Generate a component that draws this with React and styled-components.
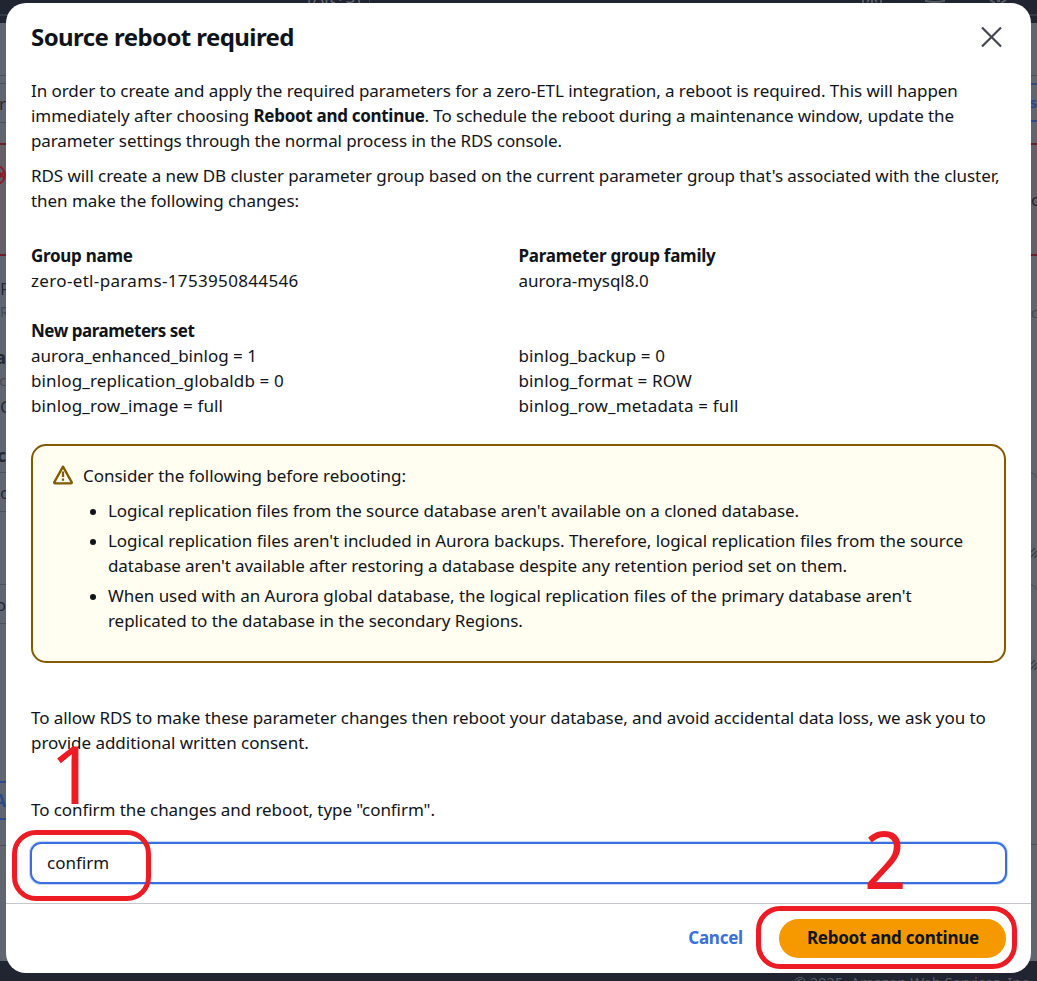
import React from 'react';
import styled, { createGlobalStyle } from 'styled-components';

const GlobalStyle = createGlobalStyle`
  * { box-sizing: border-box; }
  body {
    margin: 0;
    overflow: hidden;
    color: #0f141a;
    font: 400 17px/25px "Noto Sans", "Open Sans", sans-serif;
  }
`;

const Page = styled.div`
  position: relative;
  width: 1037px;
  height: 981px;
  display: flex;
  flex-direction: column;
  overflow: hidden;
  background: #61656f;
`;

const TopBar = styled.header`
  display: flex;
  justify-content: space-between;
  height: 23px;
  flex: none;
  padding: 0 29px 0 307px;
  background: linear-gradient(#202531 0 14px, #353a46 14px 16px, #202531 16px);
  color: #676b74;
`;

const Shortcut = styled.span`
  margin-top: -16px;
  padding-right: 8px;
  height: 19px;
  font-size: 17px;
  line-height: 25px;
  letter-spacing: 0.4px;
  border-right: 1px solid #3d424d;
`;

const TopIcons = styled.div`
  display: flex;
  gap: 43px;
`;

const Behind = styled.main`
  flex: 1;
  display: flex;
  justify-content: space-between;
`;

const EdgeColumn = styled.div`
  width: 6px;
  display: flex;
  flex-direction: column;
  overflow: hidden;
`;

const Slice = styled.div`
  flex: none;
  display: flex;
  flex-direction: column;
  justify-content: center;
  align-items: ${(p) => (p.$left ? 'flex-start' : 'flex-end')};
  height: ${(p) => p.$h}px;
  overflow: hidden;
  white-space: nowrap;
  font-size: ${(p) => p.$size || 17}px;
  font-weight: ${(p) => (p.$bold ? 700 : 400)};
  color: ${(p) => p.$color || '#242934'};
  background: ${(p) => p.$fill || 'transparent'};
  border-bottom: ${(p) => p.$line || 0}px solid ${(p) => p.$lineColor || '#4b505b'};
`;

const ErrorIcon = styled.svg`
  margin-bottom: 50px;
`;

const PageFooter = styled.footer`
  flex: none;
  height: 20px;
  padding: 9px 5px 0 0;
  background: #202531;
  color: #555a64;
  text-align: right;
  white-space: nowrap;
  font-size: 15px;
  letter-spacing: -0.23px;
`;

const Modal = styled.section`
  position: absolute;
  inset: 3px 6px 8px 6px;
  display: flex;
  flex-direction: column;
  border-radius: 20px;
  background: #fff;
`;

const ModalHeader = styled.header`
  display: flex;
  justify-content: space-between;
  align-items: flex-start;
  padding: 19px 28px 0 25px;
  height: 75px;
`;

const Title = styled.h1`
  margin: 0;
  font-size: 24px;
  line-height: 30px;
  font-weight: 700;
  letter-spacing: -0.58px;
`;

const CloseButton = styled.button`
  display: flex;
  margin: 4px 0 0;
  padding: 0;
  border: 0;
  background: none;
`;

const ModalBody = styled.div`
  flex: 1;
  padding: 0 25px;
`;

const Line = styled.span`
  display: block;
  white-space: nowrap;
  letter-spacing: ${(p) => p.$track || 0}px;
`;

const Run = styled.span`
  letter-spacing: ${(p) => p.$track}px;
`;

const Strong = styled.b`
  font-weight: 700;
  letter-spacing: ${(p) => p.$track}px;
`;

const Paragraph = styled.p`
  margin: 0 0 ${(p) => p.$after || 0}px;
`;

const Columns = styled.div`
  display: grid;
  grid-template-columns: 1fr 1fr;
`;

const Parameters = styled.div`
  margin-top: 25px;
`;

const Alert = styled.div`
  display: flex;
  height: 219px;
  margin: 26px 0 42px;
  padding: 17px 19px 0 20px;
  border: 2px solid #855900;
  border-radius: 15px;
  background: #fffef0;
`;

const AlertIcon = styled.svg`
  flex: none;
  margin: 2px 10px 0 0;
`;

const Bullets = styled.ul`
  margin: 10px 0 0;
  padding: 0;
  display: flex;
  flex-direction: column;
  gap: 5px;
  list-style: none;
`;

const Bullet = styled.li`
  display: flex;

  &::before {
    content: '';
    flex: none;
    width: 6px;
    height: 6px;
    margin: 11px 12px 0 7px;
    border-radius: 50%;
    background: #0f141a;
  }
`;

const ConfirmInput = styled.input`
  display: block;
  width: 977px;
  height: 42px;
  margin: 20px -1px 0;
  padding: 0 15px 2px;
  border: 2px solid #3870e0;
  border-radius: 11px;
  box-shadow: 0 0 0 1px #c9d8f7;
  outline: none;
  background: #fff;
  color: inherit;
  font: inherit;
`;

const ModalFooter = styled.footer`
  display: flex;
  justify-content: flex-end;
  align-items: center;
  gap: 9px;
  height: 70px;
  padding: 0 25px 0 0;
  border-top: 1px solid #c6c6cd;
`;

const Button = styled.button`
  height: 39px;
  padding: 0 27px 2px 28px;
  border: 0;
  border-radius: 20px;
  background: ${(p) => (p.$primary ? '#f69900' : 'transparent')};
  color: ${(p) => (p.$primary ? '#0f141a' : '#3870e0')};
  font: 700 17px/25px "Noto Sans", sans-serif;
  letter-spacing: -0.24px;
  white-space: nowrap;
`;

const Highlight = styled.div`
  position: absolute;
  left: ${(p) => p.$x}px;
  top: ${(p) => p.$y}px;
  width: ${(p) => p.$w}px;
  height: ${(p) => p.$h}px;
  border: 5px solid #ed1c24;
  border-radius: 24px;
`;

const StepNumber = styled.span`
  position: absolute;
  left: ${(p) => p.$x}px;
  top: ${(p) => p.$y}px;
  color: #ed1c24;
  font-size: 80px;
  line-height: 80px;
  transform: scaleX(${(p) => p.$stretch || 1});
  transform-origin: left;
`;

const blue = '#294a8c';
const red = '#6d1d29';
const tint = '#64606a';

function LeftEdge() {
  return (
    <EdgeColumn>
      <Slice $h={53} $line={1} />
      <Slice $h={8} $line={1} />
      <Slice $h={39} $line={1}>er</Slice>
      <Slice $h={22} $line={2} $lineColor={red} />
      <Slice $h={111} $line={2} $lineColor={red} $fill={tint}>
        <ErrorIcon width="20" height="20" viewBox="0 0 20 20" fill="none" stroke="#85202b" strokeWidth="2">
          <circle cx="10" cy="10" r="9" />
          <path d="m13 7 5 6m0-6-5 6" />
        </ErrorIcon>
      </Slice>
      <Slice $h={21} />
      <Slice $h={22} $left>F</Slice>
      <Slice $h={24} $size={14} $color="#454a55" $left>R</Slice>
      <Slice $h={22} />
      <Slice $h={24} $bold>a</Slice>
      <Slice $h={22} $size={14} $color="#454a55">nc</Slice>
      <Slice $h={30} $left>C</Slice>
      <Slice $h={18} />
      <Slice $h={34} $line={1} $bold>oc</Slice>
      <Slice $h={39} $line={1} $left>c</Slice>
      <Slice $h={73} $line={1} />
      <Slice $h={39} $line={1}>ko</Slice>
      <Slice $h={159} $line={2} $lineColor={blue} />
      <Slice $h={37} $line={2} $lineColor={blue} $color={blue} $bold>A</Slice>
      <Slice $h={26} $line={1} />
    </EdgeColumn>
  );
}

function Handle() {
  return (
    <svg width="6" height="12" viewBox="0 0 6 12" stroke="#3b404b" strokeWidth="1.5" fill="none">
      <path d="m0 5 4-4M0 10l6-6M3 11l3-3" />
    </svg>
  );
}

function Corner() {
  return (
    <svg width="6" height="8" viewBox="0 0 6 8" stroke="#4b505b" fill="none">
      <path d="M0 .5Q4 1 6 7" />
    </svg>
  );
}

function RightEdge() {
  return (
    <EdgeColumn>
      <Slice $h={53} $line={1} />
      <Slice $h={9} $line={2} $lineColor={blue} />
      <Slice $h={37} $line={2} $lineColor={blue} $color={blue} $size={15} $bold>s</Slice>
      <Slice $h={23} $line={2} $lineColor={red} />
      <Slice $h={111} $line={2} $lineColor={red} $fill={tint} $left>o</Slice>
      <Slice $h={44} />
      <Slice $h={24} $size={14} $color="#454a55" $left>c</Slice>
      <Slice $h={148} />
      <Slice $h={8}><Corner /></Slice>
      <Slice $h={67} />
      <Slice $h={12}><Handle /></Slice>
      <Slice $h={25} />
      <Slice $h={8}><Corner /></Slice>
      <Slice $h={67} />
      <Slice $h={12}><Handle /></Slice>
      <Slice $h={174} $line={1} />
    </EdgeColumn>
  );
}

export default function App() {
  return (
    <Page>
      <GlobalStyle />
      <TopBar>
        <Shortcut>[Alt+S]</Shortcut>
        <TopIcons>
          <svg width="20" height="3" fill="none" stroke="#555a64" strokeWidth="2">
            <path d="M1 0v3M19 0v3M5 2l2-2m3 3V0m3 0 2 2" />
          </svg>
          <svg width="20" height="3" fill="none" stroke="#555a64" strokeWidth="2">
            <path d="M1 0v1q9 2 18 0V0" />
          </svg>
          <svg width="20" height="3" fill="none" stroke="#555a64" strokeWidth="2">
            <path d="m2 0 5 3m6 0 5-3M9 1h3" />
          </svg>
        </TopIcons>
      </TopBar>
      <Behind>
        <LeftEdge />
        <RightEdge />
      </Behind>
      <PageFooter>© 2025, Amazon Web Services, Inc.</PageFooter>

      <Modal>
        <ModalHeader>
          <Title>Source reboot required</Title>
          <CloseButton aria-label="Close">
            <svg width="22" height="22" viewBox="0 0 22 22" stroke="#424650" strokeWidth="2.2">
              <path d="m1 1.5 19 19m0-19-19 19" />
            </svg>
          </CloseButton>
        </ModalHeader>

        <ModalBody>
          <Paragraph $after={10}>
            <Line $track={-0.058}>In order to create and apply the required parameters for a zero-ETL integration, a reboot is required. This will happen</Line>
            <Line>
              <Run $track={-0.02}>immediately after choosing </Run>
              <Strong $track={-0.297}>Reboot and continue</Strong>
              <Run $track={-0.075}>. To schedule the reboot during a maintenance window, update the</Run>
            </Line>
            <Line $track={-0.1}>parameter settings through the normal process in the RDS console.</Line>
          </Paragraph>
          <Paragraph $after={30}>
            <Line $track={-0.07}>RDS will create a new DB cluster parameter group based on the current parameter group that's associated with the cluster,</Line>
            <Line $track={-0.055}>then make the following changes:</Line>
          </Paragraph>

          <Columns>
            <div>
              <Strong $track={-0.28}>Group name</Strong>
              <Line $track={0.34}>zero-etl-params-1753950844546</Line>
            </div>
            <div>
              <Strong $track={-0.249}>Parameter group family</Strong>
              <Line>aurora-mysql8.0</Line>
            </div>
          </Columns>
          <Parameters>
            <Strong $track={-0.47}>New parameters set</Strong>
            <Columns>
              <Line>aurora_enhanced_binlog = 1</Line>
              <Line $track={0.12}>binlog_backup = 0</Line>
              <Line $track={0.13}>binlog_replication_globaldb = 0</Line>
              <Line $track={0.14}>binlog_format = ROW</Line>
              <Line $track={0.13}>binlog_row_image = full</Line>
              <Line $track={0.15}>binlog_row_metadata = full</Line>
            </Columns>
          </Parameters>

          <Alert>
            <AlertIcon width="20" height="20" viewBox="0 0 20 20" fill="none" stroke="#855900" strokeWidth="2.3" strokeLinejoin="round">
              <path d="M10 1.6 1.2 17.4q-.1 1 .8 1h16q.9 0 .8-1Z" />
              <path d="M10 6.6v5.4M10 13.4v2.4" />
            </AlertIcon>
            <div>
              <Line $track={-0.035}>Consider the following before rebooting:</Line>
              <Bullets>
                <Bullet>
                  <Line $track={-0.055}>Logical replication files from the source database aren't available on a cloned database.</Line>
                </Bullet>
                <Bullet>
                  <div>
                    <Line $track={-0.037}>Logical replication files aren't included in Aurora backups. Therefore, logical replication files from the source</Line>
                    <Line $track={-0.08}>database aren't available after restoring a database despite any retention period set on them.</Line>
                  </div>
                </Bullet>
                <Bullet>
                  <div>
                    <Line $track={-0.036}>When used with an Aurora global database, the logical replication files of the primary database aren't</Line>
                    <Line $track={-0.07}>replicated to the database in the secondary Regions.</Line>
                  </div>
                </Bullet>
              </Bullets>
            </div>
          </Alert>

          <Paragraph $after={42}>
            <Line $track={-0.068}>To allow RDS to make these parameter changes then reboot your database, and avoid accidental data loss, we ask you to</Line>
            <Line $track={-0.02}>provide additional written consent.</Line>
          </Paragraph>
          <Line $track={-0.07}>To confirm the changes and reboot, type "confirm".</Line>
          <ConfirmInput defaultValue="confirm" />
        </ModalBody>

        <ModalFooter>
          <Button>Cancel</Button>
          <Button $primary>Reboot and continue</Button>
        </ModalFooter>
      </Modal>

      <Highlight $x={12} $y={830} $w={139} $h={71} />
      <Highlight $x={756} $y={906} $w={261} $h={63} />
      <StepNumber $x={50} $y={733}>1</StepNumber>
      <StepNumber $x={864} $y={818} $stretch={0.93}>2</StepNumber>
    </Page>
  );
}
